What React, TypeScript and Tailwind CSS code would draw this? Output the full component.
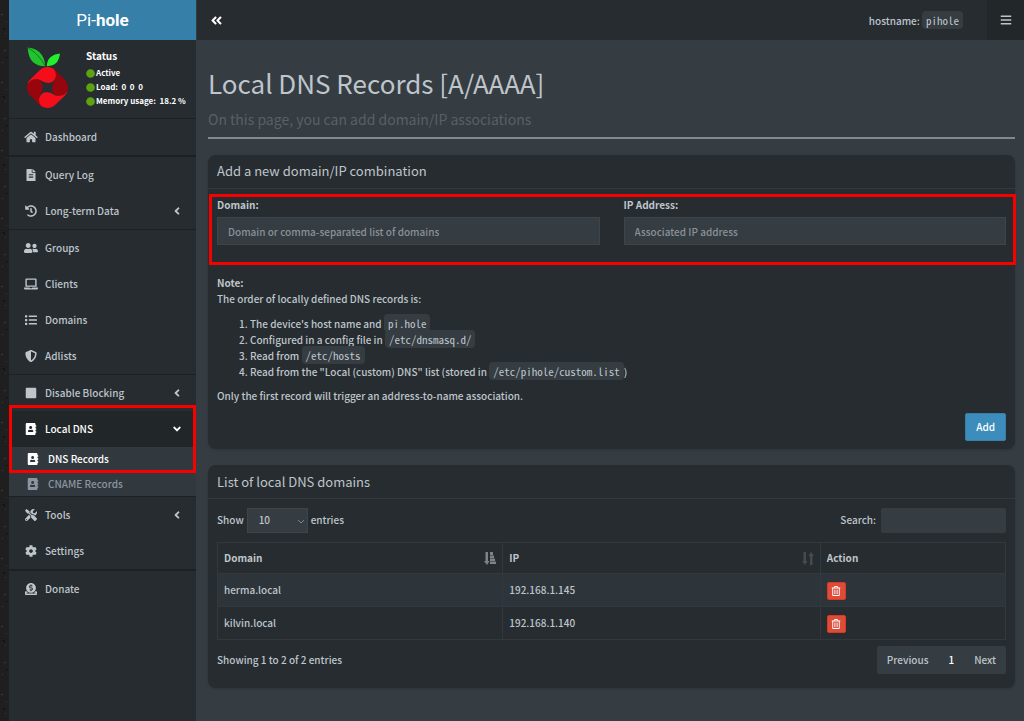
import React, { useState } from 'react';
import {
  FaHome,
  FaFileAlt,
  FaHistory,
  FaUserFriends,
  FaLaptop,
  FaList,
  FaShieldAlt,
  FaSquare,
  FaAddressBook,
  FaTools,
  FaCog,
  FaDonate,
  FaAngleLeft,
  FaAngleDown,
  FaAngleDoubleLeft,
  FaBars,
  FaCircle,
  FaRegTrashAlt
} from 'react-icons/fa';

const sections = [
  {
    divider: 'border-b-2',
    items: [{ label: 'Dashboard', icon: FaHome }]
  },
  {
    divider: 'border-b',
    items: [
      { label: 'Query Log', icon: FaFileAlt },
      { label: 'Long-term Data', icon: FaHistory, tree: true }
    ]
  },
  {
    divider: 'border-b',
    items: [
      { label: 'Groups', icon: FaUserFriends },
      { label: 'Clients', icon: FaLaptop },
      { label: 'Domains', icon: FaList },
      { label: 'Adlists', icon: FaShieldAlt }
    ]
  },
  {
    divider: 'border-b',
    items: [
      { label: 'Disable Blocking', icon: FaSquare, tree: true },
      { label: 'Local DNS', icon: FaAddressBook, tree: true, open: true }
    ]
  },
  {
    divider: 'border-b-2',
    items: [
      { label: 'Tools', icon: FaTools, tree: true },
      { label: 'Settings', icon: FaCog }
    ]
  },
  {
    divider: '',
    items: [{ label: 'Donate', icon: FaDonate }]
  }
];

const records = [
  { domain: 'herma.local', ip: '192.168.1.145' },
  { domain: 'kilvin.local', ip: '192.168.1.140' }
];

const PiholeLogo = () => {
  const lobe =
    'M4 112 C5 106 8 102 13 97 L42 69 C54 58 74 58 85 69 C95 86 88 109 66 109 C50 109 46 99 32 98 C19 97 10 102 4 112Z';
  return (
    <svg viewBox="0 0 128 188" className="w-[43px] h-[62px] shrink-0" aria-hidden="true">
      <path d="M4 2 C32 2 56 22 57 58 C26 58 6 42 4 2Z" fill="#22c32e" />
      <path d="M4 2 C26 14 44 34 57 58" stroke="#0d7a1a" strokeWidth="3" fill="none" />
      <path d="M102 20 C80 22 62 34 62 58 C88 58 98 46 102 20Z" fill="#22f02c" />
      <path d={lobe} fill="#96060c" transform="rotate(90 64 123)" />
      <path d={lobe} fill="#96060c" transform="rotate(270 64 123)" />
      <path d={lobe} fill="#f60d1a" />
      <path d={lobe} fill="#f60d1a" transform="rotate(180 64 123)" />
    </svg>
  );
};

const SortAscIcon = () => (
  <svg viewBox="0 0 12 13" className="w-3 h-[13px] text-[#7d8489]" fill="currentColor" aria-hidden="true">
    <path d="M1.5 0h2.5v9H5.5L3 13 0 9h1.5z" />
    <path d="M6 0h3v3H6zM6 3.5h4v2.5H6zM6 6.5h5v2.5H6zM6 9.5h6v2.5H6z" />
  </svg>
);

const SortIcon = () => (
  <svg viewBox="0 0 12 13" className="w-3 h-[13px] text-[#454c51]" fill="currentColor" aria-hidden="true">
    <path d="M1.5 0h2.5v9H5.5L3 13 0 9h1.5z" />
    <path d="M9 0L12 4h-1.5v9H8V4H6.5z" />
  </svg>
);

const Code = ({ children }) => (
  <code className="rounded-sm bg-[#353c42] px-1 py-px font-['Noto_Sans_Mono_CJK_SC','Liberation_Mono',monospace] text-[11px]">
    {children}
  </code>
);

const Sidebar = () => (
  <aside className="w-[188px] shrink-0 bg-[#272c30] border-r border-[#353c42]">
    <a
      href="#home"
      className="flex h-10 items-center justify-center bg-[#367fa9] font-['Roboto','Liberation_Sans',sans-serif] text-[17px] font-normal text-white"
    >
      Pi-<b>hole</b>
    </a>

    <div className="flex h-[79px] border-b border-[#1d2124] pl-[17px] pt-[7px]">
      <PiholeLogo />
      <div className="ml-[17px] font-bold text-white">
        <p className="mb-px leading-[18px]">Status</p>
        {['Active', 'Load:  0  0  0', 'Memory usage:  18.2 %'].map((line) => (
          <p key={line} className="flex items-center gap-px whitespace-pre text-[8px] leading-[14px]">
            <FaCircle size={9} className="text-[#5ca314]" />
            {line}
          </p>
        ))}
      </div>
    </div>

    <nav>
      {sections.map((section, index) => (
        <ul key={index} className={`border-[#1d2124] ${section.divider}`}>
          {section.items.map(({ label, icon: Icon, tree, open }) => (
            <li key={label} className={open ? 'relative' : ''}>
              <a
                href="#menu"
                className={`flex h-9 items-center border-l-2 px-[13px] ${
                  open ? 'border-[#4b646f] bg-[#212629] text-white' : 'border-transparent'
                }`}
              >
                <Icon size={12} className="w-[14px] shrink-0" />
                <span className="ml-[7px] flex-1">{label}</span>
                {tree && (open ? <FaAngleDown size={12} /> : <FaAngleLeft size={12} />)}
              </a>
              {open && (
                <>
                  <ul className="bg-[#32393e]">
                    <li>
                      <a href="#dns" className="flex h-6 items-center pl-[17px] text-white">
                        <FaAddressBook size={12} className="w-[14px]" />
                        <span className="ml-2">DNS Records</span>
                      </a>
                    </li>
                    <li>
                      <a href="#cname" className="flex h-[25px] items-center pl-[17px] text-[#8a959f]">
                        <FaAddressBook size={12} className="w-[14px]" />
                        <span className="ml-2">CNAME Records</span>
                      </a>
                    </li>
                  </ul>
                  {/* highlight around the open entry */}
                  <div className="pointer-events-none absolute inset-x-0 -top-[6px] h-[68px] border-3 border-[#f60000]" />
                </>
              )}
            </li>
          ))}
        </ul>
      ))}
    </nav>
  </aside>
);

const AddRecordBox = () => {
  const [domain, setDomain] = useState('');
  const [ip, setIp] = useState('');

  return (
    <section className="rounded-lg bg-[#272c30] shadow-sm">
      <h2 className="flex h-[34px] items-center border-b border-[#32383d] px-[9px] pb-0.5 text-[13px] font-normal">
        Add a new domain/IP combination
      </h2>
      <div className="px-[9px] pb-2">
        <div className="relative grid grid-cols-2 gap-6 pb-[30px] pt-2">
          <div>
            <label htmlFor="domain" className="block font-bold leading-4">
              Domain:
            </label>
            <input
              id="domain"
              type="text"
              value={domain}
              onChange={(e) => setDomain(e.target.value)}
              className="mt-1 block h-7 w-full border border-[#3d444a] bg-[#353c42] px-[10px] placeholder:text-[#8b9196] focus:outline-none"
              placeholder="Domain or comma-separated list of domains"
            />
          </div>
          <div>
            <label htmlFor="ip" className="block font-bold leading-4">
              IP Address:
            </label>
            <input
              id="ip"
              type="text"
              value={ip}
              onChange={(e) => setIp(e.target.value)}
              className="mt-1 block h-7 w-full border border-[#3d444a] bg-[#353c42] px-[10px] placeholder:text-[#8b9196] focus:outline-none"
              placeholder="Associated IP address"
            />
          </div>
          <div className="pointer-events-none absolute -left-2 -right-[10px] top-[5px] h-[71px] border-3 border-[#f60000]" />
        </div>

        <p className="font-bold">Note:</p>
        <p>The order of locally defined DNS records is:</p>
        <ol className="mb-[9px] mt-2 list-decimal pl-[33px]">
          <li className="h-4">The device's host name and <Code>pi.hole</Code></li>
          <li className="h-4">Configured in a config file in <Code>/etc/dnsmasq.d/</Code></li>
          <li className="h-4">Read from <Code>/etc/hosts</Code></li>
          <li className="h-4">Read from the "Local (custom) DNS" list (stored in <Code>/etc/pihole/custom.list</Code>)</li>
        </ol>
        <p>Only the first record will trigger an address-to-name association.</p>
        <div className="mt-[9px] flex justify-end">
          <button type="button" className="h-7 rounded-xs border border-[#367fa9] bg-[#3c8dbc] px-[10px] text-white">
            Add
          </button>
        </div>
      </div>
    </section>
  );
};

const RecordsBox = () => {
  const [search, setSearch] = useState('');
  const rows = records.filter((r) => r.domain.includes(search) || r.ip.includes(search));

  return (
    <section className="mt-4 rounded-lg bg-[#272c30] shadow-sm">
      <h2 className="flex h-[34px] items-center border-b border-[#32383d] px-[9px] text-[13px] font-normal">
        List of local DNS domains
      </h2>
      <div className="px-[9px] pb-[14px] pt-[9px]">
        <div className="flex h-6 items-center justify-between">
          <div className="flex items-center gap-[3px]">
            <label htmlFor="length">Show</label>
            <div className="relative">
              <select
                id="length"
                className="block h-[25px] w-[61px] appearance-none border border-[#3d444a] bg-[#353c42] pl-[11px]"
              >
                <option>10</option>
                <option>25</option>
              </select>
              <svg viewBox="0 0 8 5" className="absolute right-[3px] top-[11px] h-[5px] w-2" aria-hidden="true">
                <path d="M1 1l3 3 3-3" stroke="#7d8489" fill="none" />
              </svg>
            </div>
            <span>entries</span>
          </div>
          <div className="flex items-center gap-[5px]">
            <label htmlFor="search">Search:</label>
            <input
              id="search"
              type="search"
              value={search}
              onChange={(e) => setSearch(e.target.value)}
              className="h-[25px] w-[125px] rounded-xs bg-[#353c42] px-2 focus:outline-none"
            />
          </div>
        </div>

        <table className="mt-[10px] w-full table-fixed border-collapse text-left">
          <thead>
            <tr className="h-[31px]">
              <th className="w-[36.2%] border border-[#32383d] px-[6px]">
                <div className="flex items-center justify-between">
                  Domain <SortAscIcon />
                </div>
              </th>
              <th className="w-[40.3%] border border-[#32383d] px-[6px]">
                <div className="flex items-center justify-between">
                  IP <SortIcon />
                </div>
              </th>
              <th className="border border-[#32383d] px-[6px]">Action</th>
            </tr>
          </thead>
          <tbody>
            {rows.map((row) => (
              <tr key={row.domain} className="h-[33px] odd:bg-[#2d343a]">
                <td className="border border-[#32383d] px-[6px]">{row.domain}</td>
                <td className="border border-[#32383d] px-[6px]">{row.ip}</td>
                <td className="border border-[#32383d] px-[6px]">
                  <button
                    type="button"
                    aria-label={`Delete ${row.domain}`}
                    className="mt-[2px] flex h-[18px] w-[19px] items-center justify-center rounded-xs border border-[#d73925] bg-[#dd4b39] text-white"
                  >
                    <FaRegTrashAlt size={10} />
                  </button>
                </td>
              </tr>
            ))}
          </tbody>
        </table>

        <div className="mt-[6px] flex items-center justify-between">
          <p>Showing 1 to 2 of 2 entries</p>
          <div className="flex h-7 items-center rounded-xs bg-[#353c42]">
            <button type="button" className="px-[10px]">Previous</button>
            <button type="button" className="px-[10px] text-white">1</button>
            <button type="button" className="px-[10px]">Next</button>
          </div>
        </div>
      </div>
    </section>
  );
};

const App = () => {
  return (
    <div className="flex min-h-screen bg-[#353c42] font-['Noto_Sans_CJK_SC',sans-serif] text-[10px] font-medium leading-4 text-[#bec5cb]">
      <svg className="w-[9px] shrink-0 self-stretch bg-[#1f1f1f]" aria-hidden="true">
        <defs>
          <pattern id="specks" width="9" height="68" patternUnits="userSpaceOnUse">
            <path d="M1 14h2v1H1zM4 50h2v1H4zM6 21h1v1H6zM2 62h1v1H2zM5 33h1v1H5z" fill="#3a3a3a" />
            <path d="M3 28h2v2H3zM6 57h2v1H6z" fill="#121212" />
          </pattern>
        </defs>
        <rect width="9" height="100%" fill="url(#specks)" />
      </svg>
      <Sidebar />
      <div className="min-w-0 flex-1">
        <header className="flex h-10 items-center bg-[#272c30]">
          <button type="button" aria-label="Toggle navigation" className="px-[13px] text-white">
            <FaAngleDoubleLeft size={13} />
          </button>
          <p className="ml-auto mr-6">
            hostname: <Code>pihole</Code>
          </p>
          <button
            type="button"
            aria-label="Menu"
            className="flex h-10 w-[37px] items-center justify-center bg-[#22272a]"
          >
            <FaBars size={12} />
          </button>
        </header>

        <main className="pl-[11px] pr-[9px] pt-[23px]">
          <h1 className="text-[26px] font-normal leading-10">Local DNS Records [A/AAAA]</h1>
          <p className="mt-1 text-sm font-normal leading-6 text-[#5b6064]">
            On this page, you can add domain/IP associations
          </p>
          <hr className="mb-4 mt-[6px] border-t-2 border-[#85898c]" />
          <AddRecordBox />
          <RecordsBox />
        </main>
      </div>
    </div>
  );
};

export default App;
